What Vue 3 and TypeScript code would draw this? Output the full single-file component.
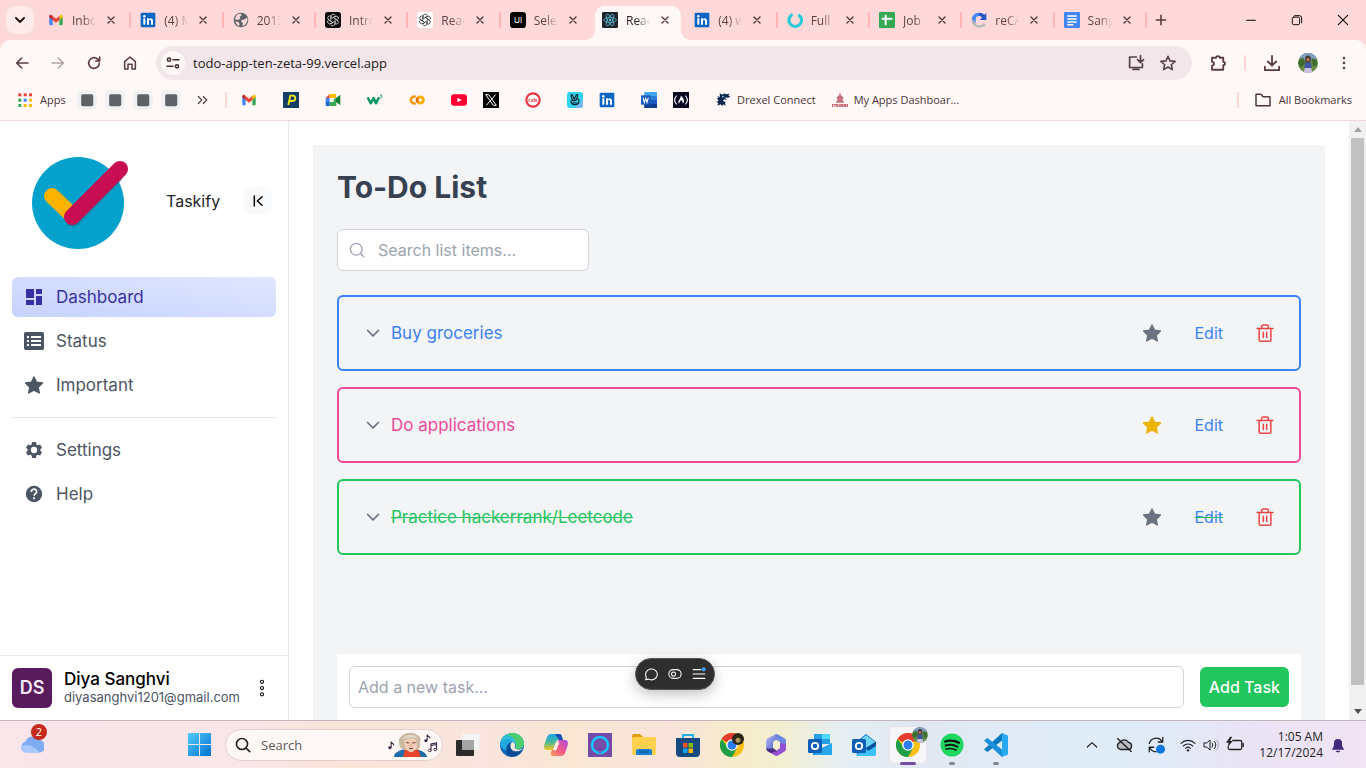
<script setup lang="ts">
import { ref } from 'vue'

interface Tab { icon: string; title: string; active?: boolean }
interface Bookmark { icon: string; name: string; label?: string; wide?: boolean }
interface Task { id: number; title: string; tone: string; starred: boolean; done: boolean }

const line = (body: string, width = 2) =>
  `<g fill="none" stroke="currentColor" stroke-width="${width}" stroke-linecap="round" stroke-linejoin="round">${body}</g>`

const gmail = '<path d="M2 7v11.500a1.500 1.500 0 0 0 1.500 1.500H7V9.500z" fill="#4285f4"/><path d="M17 9.500V20h3.500a1.500 1.500 0 0 0 1.500-1.500V7z" fill="#34a853"/><path d="M2 6.500V8l5 4V6L5 4.500C3.700 3.600 2 4.800 2 6.500z" fill="#c5221f"/><path d="M22 6.500V8l-5 4V6l2-1.500c1.300-.9 3 .3 3 2z" fill="#fbbc04"/><path d="M7 6l5 4 5-4v6l-5 4-5-4z" fill="#ea4335"/>'
const linkedin = '<rect x="1" y="1" width="22" height="22" rx="1.500" fill="#0a66c2"/><rect x="5" y="9.500" width="3" height="9.500" fill="#fff"/><circle cx="6.500" cy="6.300" r="1.900" fill="#fff"/><path d="M10.500 9.500h3V11c1.500-2.800 6-2.200 6 2.500V19h-3v-5c0-3-3-3-3 0v5h-3z" fill="#fff"/>'
const knot = (bg: string, fg: string) =>
  `<rect width="24" height="24" rx="4" fill="${bg}"/><g fill="none" stroke="${fg}" stroke-width="1.300">` +
  [0, 60, 120, 180, 240, 300].map(a => `<path transform="rotate(${a} 12 12)" d="M9 12V6.500a3.300 3.300 0 0 1 6-1.800M12 8.400l4.500-2.500"/>`).join('') + '</g>'
const outlookFront = '<rect x="0" y="6" width="14" height="14" rx="1.500" fill="#0f5fb8"/><circle cx="7" cy="13" r="3.200" fill="none" stroke="#fff" stroke-width="1.800"/>'
const chrome = '<circle cx="12" cy="12" r="12" fill="#fbc116"/><path d="M12 12L1.600 6A12 12 0 0 1 22.400 6z" fill="#e33b2e"/><path d="M1.600 6A12 12 0 0 0 12 24l5-9-8 1z" fill="#1e9e49"/><circle cx="12" cy="12" r="5.800" fill="#fff"/><circle cx="12" cy="12" r="4.500" fill="#2a7cf0"/>'

const icons: Record<string, string> = {
  gmail,
  linkedin,
  globe: '<circle cx="12" cy="12" r="11" fill="#5f6368"/><path d="M4 7c2-4 6-5 8-4l1 2-3 2 1 3-4 2-2-1-2 1zM13 12l5-1 3-3 1 4-2 5-4 4-2-1 1-4-3-1zM4 14l4 1 2 3-1 3c-3-1-5-4-5-7z" fill="#ffd9d9"/>',
  gptDark: knot('#0b0b0b', '#d5d5d5'),
  gptLight: knot('#ffffff', '#333333'),
  ui: '<rect width="24" height="24" rx="5" fill="#050505"/><text x="12" y="16.500" font-family="Inter, sans-serif" font-size="12" text-anchor="middle" fill="#fff">UI</text>',
  react: '<rect width="24" height="24" rx="2" fill="#20232a"/><g fill="none" stroke="#5fc6df" stroke-width="1.100"><ellipse cx="12" cy="12" rx="9.500" ry="3.700"/><ellipse cx="12" cy="12" rx="9.500" ry="3.700" transform="rotate(60 12 12)"/><ellipse cx="12" cy="12" rx="9.500" ry="3.700" transform="rotate(120 12 12)"/></g><circle cx="12" cy="12" r="1.900" fill="#5fc6df"/>',
  ring: '<path d="M8.500 3.700A9.400 9.400 0 1 0 17 4.100" fill="none" stroke="#22cbd8" stroke-width="4.500"/>',
  sheets: '<rect width="24" height="24" rx="2" fill="#34a853"/><path d="M8.500 4h3v4.500H20v3h-8.500V20h-3v-8.500H4v-3h4.500z" fill="#fff"/>',
  recaptcha: '<path d="M4.500 15.500c3 5 10 6 15 1l3 3c-7 6-16 5-20-2z" fill="#b9bcc0"/><path d="M1 10.500C2 5 6 1 12 1v5c-3 0-5 2-5 5v5.500z" fill="#4285f4"/><path d="M12 1c4 0 6 1 8 3l3-2.500V12H13l3.500-3.500C15 6.500 13.500 6 12 6z" fill="#2458c8"/><path d="M1 10.500L7 17l-2.500 2.500C2 17 .7 14 1 10.500z" fill="#a9adb2"/>',
  docs: '<rect width="24" height="24" rx="2" fill="#4285f4"/><path d="M5 6h14M5 10.500h14M5 15h14M5 19h9" stroke="#fff" stroke-width="2.200"/>',
  close: line('<path d="M6 6l12 12M18 6L6 18"/>', 2.8),
  chev: line('<path d="M5.500 9l6.500 6.500L18.500 9"/>', 2),
  chevBold: line('<path d="M6 9l6 6 6-6"/>', 3),
  chevUp: line('<path d="M4 15.500l8-7.500 8 7.500"/>', 2),
  plus: line('<path d="M12 4v16M4 12h16"/>', 2.6),
  min: '<path d="M4 12.500h16" stroke="currentColor" stroke-width="1.700"/>',
  restore: line('<rect x="4" y="7" width="12.500" height="13" rx="2.500"/><path d="M8 4.500h8a4 4 0 0 1 4 4V17"/>', 1.6),
  winClose: line('<path d="M4 4l16 16M20 4L4 20"/>', 1.8),
  back: line('<path d="M21 12H4M11.500 4.500L4 12l7.500 7.500"/>', 2.4),
  forward: line('<path d="M3 12h17M12.500 4.500L20 12l-7.500 7.500"/>', 2.4),
  reload: line('<path d="M20 12a8 8 0 1 1-2.500-5.800L20 8.500M20.500 3v6h-6"/>', 2.4),
  home: line('<path d="M4 10l8-7 8 7v11h-5v-7H9v7H4z"/>', 2.3),
  tune: line('<circle cx="6" cy="7" r="2.400"/><path d="M12 7h9M3 17h9"/><circle cx="18" cy="17" r="2.400"/>', 2.3),
  install: line('<path d="M12.500 4H3.500v14h17v-5M8 20.500h8"/><path d="M18 2v9M14 7.500l4 4 4-4"/>', 2.3),
  starLine: line('<path d="M12 3l2.700 6.200 6.800.6-5.100 4.500 1.500 6.600-5.900-3.500-5.900 3.500 1.500-6.600-5.100-4.500 6.800-.6z"/>', 2.1),
  puzzle: line('<path d="M4 5h5.500c0-3 5-3 5 0H19v5.500c3 0 3 4.500 0 4.500v6H4v-5.500c3.500 0 3.500-5 0-5z"/>', 2.4),
  download: line('<path d="M12 2.500v13M6.500 10l5.500 5.500L17.500 10M2.500 17v4.500h19V17"/>', 2.4),
  dots: '<g fill="currentColor"><circle cx="12" cy="4.500" r="2"/><circle cx="12" cy="12" r="2"/><circle cx="12" cy="19.500" r="2"/></g>',
  face: '<circle cx="12" cy="12" r="12" fill="#668b4b"/><path d="M2 5a12 12 0 0 1 20 0l-1 4H3z" fill="#7fa0c2"/><path d="M1 9l5-4 3 7-5 5-4-4zM16 6l6 2 1 7-5 1z" fill="#3f6c2e"/><ellipse cx="12" cy="7.500" rx="3.500" ry="4.500" fill="#4b342c"/><ellipse cx="12" cy="8" rx="1.800" ry="2.300" fill="#a97c65"/><path d="M8.500 11.500h7l1 7h-9z" fill="#3f57a0"/><path d="M8 18h8l1 5c-3 1.300-7 1.300-10 0z" fill="#c9bfe0"/>',
  apps: [['#ea4335', '#ea4335', '#ea4335'], ['#34a853', '#4285f4', '#fbbc04'], ['#34a853', '#fbbc04', '#fbbc04']]
    .map((row, y) => row.map((c, x) => `<rect x="${2 + x * 8}" y="${2 + y * 8}" width="4.500" height="4.500" fill="${c}"/>`).join('')).join(''),
  block: '<rect width="24" height="24" rx="6" fill="#eff1f3"/><rect x="5" y="5" width="14.500" height="14.500" rx="2" fill="#5f6368"/>',
  more: line('<path d="M4 6l6 6-6 6M12.500 6l6 6-6 6"/>', 2.2),
  paint: '<rect width="24" height="24" fill="#143d68"/><path d="M8 19.500l3-14h3.500a3.600 3.600 0 0 1 0 8H10" fill="none" stroke="#f2e614" stroke-width="2.800"/>',
  meet: '<path d="M1 9l6-6v6z" fill="#ea4335"/><path d="M7 3h9.500v6H7z" fill="#fbbc04"/><path d="M1 9h6v6H1z" fill="#4285f4"/><path d="M1 15h6v6H2.500A1.500 1.500 0 0 1 1 19.500z" fill="#1967d2"/><path d="M7 15h5l5-3v9H7z" fill="#34a853"/><path d="M12.500 12L23 4v16z" fill="#188038"/><path d="M16.500 3v6l-4 3 4 4z" fill="#34a853"/>',
  w3: '<path d="M1 8l4.500 9L10 9l3.500 8L18 8" fill="none" stroke="#059862" stroke-width="3.600" stroke-linejoin="round"/><path d="M19.500 4.500h3l-1.500 2c2 0 2 3-1.500 2.600" fill="none" stroke="#059862" stroke-width="1.200"/>',
  colab: '<g fill="none" stroke-width="4"><path d="M10 7.500a5 5 0 1 0 0 9" stroke="#f09a17"/><circle cx="17" cy="12" r="4.700" stroke="#f9ab00"/><path d="M13.500 15.500a4.700 4.700 0 0 1 0-7" stroke="#e8710a"/></g>',
  youtube: '<rect y="3.500" width="24" height="17" rx="4.500" fill="#ff0033"/><path d="M9.500 8.500v7l6.500-3.500z" fill="#fff"/>',
  x: '<rect width="24" height="24" fill="#000"/><path d="M4 4h4.500L20 20h-4.500zM19 4L5 20" fill="none" stroke="#fff" stroke-width="1.500"/>',
  cafe: '<circle cx="12" cy="12" r="10" fill="#fff" stroke="#e3343f" stroke-width="3.200"/><text x="12" y="14.500" font-family="Inter, sans-serif" font-size="6.500" font-weight="700" text-anchor="middle" fill="#e3343f">cafe</text>',
  hand: '<rect width="24" height="24" rx="4" fill="#31d5ef"/><path d="M24 12v8a4 4 0 0 1-4 4h-8z" fill="#7db7ff"/><g fill="none" stroke="#10242e" stroke-width="1.800" stroke-linecap="round"><path d="M8 12L6 5.500c0-2 2-2 2.500 0L11 11l2.500-6c1-2 3-1 2.500.5L14.500 11M6 13c0 8 12 8 12 0 0-3-5-3-5 0H8.500M9 16.500h6"/></g>',
  word: '<rect x="5" width="19" height="24" fill="#41a5ee"/><path d="M5 6h19v6H5z" fill="#2b7cd3"/><path d="M5 12h19v6H5z" fill="#185abd"/><path d="M5 18h19v6H5z" fill="#103f91"/><rect y="5" width="14" height="14" fill="#185abd"/><path d="M3 8.500l2 7 2-6 2 6 2-7" fill="none" stroke="#fff" stroke-width="1.600"/>',
  fcc: '<rect width="24" height="24" fill="#0a0a23"/><path d="M5 6c-3 3.500-3 8.500 0 12M19 6c3 3.500 3 8.500 0 12" fill="none" stroke="#fff" stroke-width="1.700" stroke-linecap="round"/><path d="M9 17.500l-1-2c0-4 4-5 3.500-10 4 2 5 6 5 9l-1.500 3-1-4-2-1.500-1.500 2z" fill="#fff"/>',
  dragon: '<path d="M7 2l4 2 4-2 1 1.500 6-1-2 3 3.500 1.500-4 1.500-3.500.5 2 3-4.500-1-1.500 2.500 4 1.500-1 1.500 1 4-4-2-1 3-2.500-3-5 2 1.500-4-3-1.500 3.500-2-3-4 3.500.5L3 6l4.500 1.500z" fill="#07294d"/><path d="M11 6l3 .5-3 2zM15 8.500l3.500-1-3 2.500z" fill="#dceaf5"/>',
  stevens: '<path d="M12 1l2 5 3 2-1 4 2 4H6l2-4-1-4 3-2z" fill="#b65260"/><path d="M12 4v12M9 9v7M15 9v7" stroke="#f6dcdc" stroke-width=".8"/><text x="12" y="23" font-family="Inter, sans-serif" font-size="5.600" font-weight="800" text-anchor="middle" fill="#b4263c">STEVENS</text>',
  folder: line('<path d="M1.500 20.500v-17h7.500l3 3.500h10.500v13.500z"/>', 2.2),
  collapse: line('<path d="M6.500 4.500v15M18 5.500L11 12l7 6.500"/>', 2.2),
  dashboard: '<path d="M2.400 13.200H12V2.400H2.400zm0 8.400H12v-6H2.400zm12 0h7.200V10.800h-7.200zm0-19.200v6h7.200v-6z" fill="currentColor"/>',
  status: '<path fill-rule="evenodd" d="M2 1.200h20a2 2 0 0 1 2 2v17.600a2 2 0 0 1-2 2H2a2 2 0 0 1-2-2V3.200a2 2 0 0 1 2-2zM3.600 6v2.400H6V6zM3.600 10.800v2.400H6v-2.400zM3.600 15.600V18H6v-2.400zM8.400 6v2.400h12V6zM8.400 10.800v2.400h12v-2.400zM8.400 15.600V18h12v-2.400z" fill="currentColor"/>',
  star: '<path d="M12 2.300l3.100 6.400 7.100.9-5.200 5 1.400 7-6.400-3.500-6.400 3.500 1.400-7-5.200-5 7.100-.9z" fill="currentColor" stroke="currentColor" stroke-width="1.600" stroke-linejoin="round"/>',
  gear: '<path fill-rule="evenodd" d="M9.700 2.500h4.600l.6 2.800 1.700 1 2.700-.9 2.300 3.900-2 1.900v1.600l2 1.900-2.300 3.900-2.700-.9-1.700 1-.6 2.800H9.700l-.6-2.800-1.700-1-2.700.9-2.300-3.900 2-1.900v-1.600l-2-1.900 2.300-3.900 2.700.9 1.700-1zM12 8.200a3.800 3.800 0 1 0 0 7.600 3.800 3.800 0 0 0 0-7.600z" fill="currentColor"/>',
  help: '<circle cx="12" cy="12" r="9.800" fill="currentColor"/><path d="M8.800 9.500c.2-4.600 6.700-4.200 6.400-.3-.2 2.300-3 2.500-3 5" fill="none" stroke="#fff" stroke-width="2"/><rect x="11" y="16" width="2.200" height="2.200" fill="#fff"/>',
  rings: line('<circle cx="12" cy="4.500" r="1.900"/><circle cx="12" cy="12" r="1.900"/><circle cx="12" cy="19.500" r="1.900"/>', 1.3),
  search: line('<circle cx="11" cy="11" r="7.800"/><path d="M17 17l4 4"/>', 1.8),
  searchBold: line('<circle cx="10.500" cy="10.500" r="8.300"/><path d="M16.500 16.500L22 22"/>', 2.4),
  trash: line('<path d="M2.500 6.500h19M5 6.500v14a1.500 1.500 0 0 0 1.500 1.500h11a1.500 1.500 0 0 0 1.500-1.500v-14M8 6.500V4a1.500 1.500 0 0 1 1.500-1.500h5A1.500 1.500 0 0 1 16 4v2.500M10 11v6.500M14 11v6.500"/>', 1.8),
  comment: line('<path d="M3 22l1-5A10 9.300 0 1 1 8 20.800z"/>', 1.8),
  eye: line('<rect x="1.500" y="4.500" width="21" height="15" rx="7.500"/><circle cx="9.500" cy="12" r="3.500"/>', 1.8),
  menu: '<path d="M2 4.500h13M2 12h20M2 19.500h20" stroke="#fff" stroke-width="1.900" stroke-linecap="round"/><circle cx="20" cy="4" r="3.600" fill="#3b9cff"/>',
  weather: '<path d="M6 19.500a5.700 5.700 0 0 1-.5-11A8 8 0 0 1 19.500 7 6.300 6.300 0 0 1 20 19.500z" fill="#7fabf2"/><path d="M5 19.500a5 5 0 0 1-4-6c7-4 13 0 19 6z" fill="#a9c8fb"/>',
  windows: '<defs><linearGradient id="win" x1="0" y1="0" x2="1" y2="1"><stop offset="0" stop-color="#52cdfb"/><stop offset="1" stop-color="#0070d0"/></linearGradient></defs><path d="M0 0h11.500v11.500H0zM12.500 0H24v11.500H12.500zM0 12.500h11.500V24H0zM12.500 12.500H24V24H12.500z" fill="url(#win)"/>',
  composer: '<path d="M1 24c0-4 4-6 9-7.500h14c5 1 9 3 10 7.500z" fill="#1c6da8"/><path d="M12 16l6 3 7-3 3 8H10z" fill="#e6452c"/><path d="M6 9c-1-4 3-6 4-7 3-3 12-3 14 0 4 1 4 6 3 8 1 4-1 6-4 7H12c-3 0-6-3-6-8z" fill="#cbb9a4"/><path d="M11 8c2-3 10-3 12-1l1 6c-1 4-4 6-6 6s-5-2-6-5z" fill="#f3cdb5"/><path d="M9 7c2-6 13-7 16-1-5-2-11-2-16 1z" fill="#e2d7c8"/><path d="M13 9.500l3 .5M19.500 10l3-.5M16 15.500h4" stroke="#70453d" stroke-width="1.100"/><path d="M18 10v3.500h1" fill="none" stroke="#d99e87" stroke-width=".9"/>',
  note: '<path d="M10 4v14M10 4c1 5 8 4 6 9" fill="none" stroke="#3c2444" stroke-width="2.500"/><ellipse cx="7" cy="18.500" rx="4" ry="3.400" fill="#3c2444"/>',
  notes: '<path d="M8 19V6l11-2v13M8 9l11-2" fill="none" stroke="#3c2444" stroke-width="2.200"/><ellipse cx="5.500" cy="19" rx="3" ry="2.300" fill="none" stroke="#3c2444" stroke-width="1.800"/><ellipse cx="16.500" cy="17" rx="3" ry="2.300" fill="none" stroke="#3c2444" stroke-width="1.800"/>',
  taskview: '<rect x="6" y="1" width="17.500" height="16" rx="1" fill="#f4f4f4"/><rect x="0" y="7" width="18" height="16" rx="1" fill="#2b2b2b"/><path d="M6 7h12v10H6z" fill="#a5a5a5"/>',
  edge: '<circle cx="12" cy="12" r="12" fill="#0c68b8"/><path d="M.2 10C2-2 21-4 23.800 10c.6 5-4 7-9 5.500 2-2.500 1-6.500-3-7C6 8 1.500 10 .2 13z" fill="#2fc0d8"/><path d="M12 0c7 0 12 5 12 10.500 0 5-5 6.500-9 5 3-5 0-12-9-14z" fill="#4bcf6e"/><path d="M.2 10C4 5 10 5 13 8.500 8 9 7 14 9.500 18c-5 0-9-3-9.300-8z" fill="#1fa9dd"/><path d="M10 9.500c-2 6 4 11 12 7.500-3 6-9 7-12 6.500-5-3-5-11 0-14z" fill="#0a4b96"/><path d="M12 9c3 0 4 3 2.500 6 2.500 2 6 2 8.500.5-3 3.500-10 4-12 0-1-2-.5-5 1-6.500z" fill="#fbe9dc"/>',
  copilot: '<defs><linearGradient id="cpa" x1="0" y1="0" x2="0" y2="1"><stop offset="0" stop-color="#1aa6e8"/><stop offset=".5" stop-color="#48b89a"/><stop offset="1" stop-color="#f4c61c"/></linearGradient><linearGradient id="cpb" x1="1" y1="0" x2="0" y2="1"><stop offset="0" stop-color="#a64be8"/><stop offset=".5" stop-color="#f0588a"/><stop offset="1" stop-color="#fb9d57"/></linearGradient></defs><path d="M7 1h8c2 0 2.500 1 3 3l1 3h-4c-2 0-3 1-3.500 3L9 17H3c-3 0-3.500-3-2.500-6L3 4c1-2 2-3 4-3z" fill="url(#cpa)"/><path d="M17 23H9c-2 0-3-2-2-4l1-2c2 0 3-1 3.500-3L15 7h6c3 0 3.500 3 2.500 6L21 20c-1 2-2 3-4 3z" fill="url(#cpb)"/><path d="M11 1h4c2 0 2.500 1 3 3l1 3h-4z" fill="#1b50b8"/><path d="M12.500 9l3 .5-3.500 8-3-.5z" fill="#fdeee6"/>',
  alexa: '<rect width="24" height="24" fill="#744ca8"/><circle cx="12" cy="12" r="8" fill="none" stroke="#14c8ff" stroke-width="2.500"/><path d="M10.500 18.500l1.500 2.500 1.500-2.500z" fill="#744ca8"/>',
  explorer: '<path d="M0 3a2 2 0 0 1 2-2h6l3 3v4H0z" fill="#dfa014"/><rect y="4" width="24" height="18" rx="1.500" fill="#ffd04e"/><path d="M4 18a2 2 0 0 1 2-2h12a2 2 0 0 1 2 2v4H4z" fill="#1780d3"/><path d="M7 19h10" stroke="#105a9c" stroke-width="1.500"/>',
  store: '<path d="M7 7V2h10v5" fill="none" stroke="#27b1ea" stroke-width="2"/><path d="M0 5h24v15a4 4 0 0 1-4 4H4a4 4 0 0 1-4-4z" fill="#184a82"/><path d="M7 10h4.500v4.500H7z" fill="#f35325"/><path d="M12.500 10H17v4.500h-4.500z" fill="#81bc06"/><path d="M7 15.500h4.500V20H7z" fill="#05a6f0"/><path d="M12.500 15.500H17V20h-4.500z" fill="#ffba08"/>',
  chrome,
  m365: '<defs><linearGradient id="m3" x1="0" y1="0" x2="1" y2="1"><stop offset="0" stop-color="#c3bcf4"/><stop offset="1" stop-color="#3b58c8"/></linearGradient></defs><path d="M11 1.500a3 3 0 0 1 3 0l6 3.500a3 3 0 0 1 2 2.500V14l-6-2V9l-5-3z" fill="#6f86de"/><path d="M12 1l1 5-4 3v7l-5 3-2-3V8a3 3 0 0 1 1.500-2.500z" fill="url(#m3)"/><path d="M22 11v5a3 3 0 0 1-1.500 2.500L14 22.500a3 3 0 0 1-3 0L4 18.500l8-.5 4-3v-5z" fill="#9350d0"/><path d="M2 15c2 1 5 1 7 0l4 3-6 2-3.500-2z" fill="#4a2d87"/>',
  outlook: '<path d="M6 1h16v10H6z" fill="#27a0e5"/><path d="M14 1h8v5h-8z" fill="#50d9ff"/><path d="M5 10l9 5 10-5v12H5z" fill="#1490df"/><path d="M5 22l19-12v12z" fill="#28a8ea"/>' + outlookFront,
  outlookNew: '<path d="M4 9l10-8 10 8v11a3 3 0 0 1-3 3H5z" fill="#1370c8"/><path d="M8 7l6-5 9 7-9 6z" fill="#6cd6fb"/><path d="M4 22l20-12v10a3 3 0 0 1-3 3H5z" fill="#3cc4f8"/><path d="M14 15l10-6v4l-8 5z" fill="#0b4fa0"/>' + outlookFront,
  spotify: '<circle cx="12" cy="12" r="11.500" fill="#1ed760"/><g fill="none" stroke="#111" stroke-linecap="round"><path d="M5 8.500c5-1.500 10-1 14 1.200" stroke-width="2.200"/><path d="M5.500 12.500c4-1.200 8.500-.8 12 1.200" stroke-width="1.900"/><path d="M6 16c3.500-.9 7-.6 10 1" stroke-width="1.600"/></g>',
  vscode: '<path d="M18 0v7.500L3.500 19 0 16.500z" fill="#0a78c2"/><path d="M18 24v-7.500L3.500 5 0 7.500z" fill="#1b8fda"/><path d="M18 0l6 2.500v19L18 24z" fill="#29a9f2"/>',
  cloudOff: '<path d="M7 18a5 5 0 0 1-.5-9.500A6.500 6.500 0 0 1 18 8.500 4.800 4.800 0 0 1 18 18z" fill="#b9bcc2" stroke="#222" stroke-width="1.700"/><path d="M3 3l19 18" stroke="#222" stroke-width="2"/>',
  sync: line('<path d="M3 10a9.500 9.500 0 0 1 17-3M21 2v6h-6M12 21a9 9 0 0 1-8-5M3 21v-6h6"/>', 1.7) + '<circle cx="18" cy="17.500" r="6" fill="#0b78dc"/>',
  wifi: line('<path d="M1.500 9.500c6-6 15-6 21 0M5 13.500c4-4 10-4 14 0M8.500 17c2-2 5-2 7 0"/>', 1.7) + '<circle cx="12" cy="20" r="1.800" fill="currentColor"/>',
  volume: line('<path d="M1.500 9v6h4l5 4.500v-15L5.500 9zM13.500 9c1.500 2 1.500 4 0 6M17 6.500c3 3 3 8 0 11"/>', 1.5) + '<path d="M20 4c4 4.500 4 11.500 0 16" fill="none" stroke="#aaa" stroke-width="1.500"/>',
  battery: line('<path d="M9 6h10a2 2 0 0 1 2 2v8a2 2 0 0 1-2 2H5a2 2 0 0 1-2-2v-1.500M23 10v4"/>', 1.7) + '<path d="M5.500 1L0 9h3.500L2 15l7-8.500H5.500L8 1z" fill="currentColor"/>',
  bell: '<path d="M4 17c2-3 2-5 2-8a6 6 0 0 1 12 0c0 3 0 5 2 8l1.500 2h-19z" fill="#43297d"/><path d="M8.500 20.500h7c-1 3-6 3-7 0z" fill="#43297d"/>'
}

const tabs: Tab[] = [
  { icon: 'gmail', title: 'Inbo' },
  { icon: 'linkedin', title: '(4) M' },
  { icon: 'globe', title: '2015' },
  { icon: 'gptDark', title: 'Intro' },
  { icon: 'gptLight', title: 'Reac' },
  { icon: 'ui', title: 'Sele' },
  { icon: 'react', title: 'Reac', active: true },
  { icon: 'linkedin', title: '(4) w' },
  { icon: 'ring', title: 'Full' },
  { icon: 'sheets', title: 'Job' },
  { icon: 'recaptcha', title: 'reCA' },
  { icon: 'docs', title: 'Sang' }
]

const bookmarks: Bookmark[] = [
  { icon: 'gmail', name: 'Gmail' },
  { icon: 'paint', name: 'Plum', wide: true },
  { icon: 'meet', name: 'Meet', wide: true },
  { icon: 'w3', name: 'W3Schools', wide: true },
  { icon: 'colab', name: 'Colab', wide: true },
  { icon: 'youtube', name: 'YouTube', wide: true },
  { icon: 'x', name: 'X' },
  { icon: 'cafe', name: 'Cafe', wide: true },
  { icon: 'hand', name: 'Hand', wide: true },
  { icon: 'linkedin', name: 'LinkedIn' },
  { icon: 'word', name: 'Word', wide: true },
  { icon: 'fcc', name: 'freeCodeCamp' },
  { icon: 'dragon', name: 'Drexel Connect', label: 'Drexel Connect', wide: true },
  { icon: 'stevens', name: 'My Apps', label: 'My Apps Dashboar...' }
]

const nav = [
  { icon: 'dashboard', label: 'Dashboard' },
  { icon: 'status', label: 'Status' },
  { icon: 'star', label: 'Important' }
]
const navMore = [
  { icon: 'gear', label: 'Settings' },
  { icon: 'help', label: 'Help' }
]

const tasks = ref<Task[]>([
  { id: 1, title: 'Buy groceries', tone: 'blue', starred: false, done: false },
  { id: 2, title: 'Do applications', tone: 'pink', starred: true, done: false },
  { id: 3, title: 'Practice hackerrank/Leetcode', tone: 'green', starred: false, done: true }
])
const query = ref('')
const draft = ref('')
const url = ref('todo-app-ten-zeta-99.vercel.app')

function addTask() {
  const title = draft.value.trim()
  if (!title) return
  tasks.value.push({ id: Date.now(), title, tone: 'blue', starred: false, done: false })
  draft.value = ''
}
function removeTask(id: number) {
  tasks.value = tasks.value.filter(t => t.id !== id)
}

const dock = [
  { icon: 'taskview', name: 'Task view' },
  { icon: 'edge', name: 'Edge' },
  { icon: 'copilot', name: 'Copilot' },
  { icon: 'alexa', name: 'Alexa' },
  { icon: 'explorer', name: 'File Explorer' },
  { icon: 'store', name: 'Store' },
  { icon: 'chrome', name: 'Chrome', badge: 'dark' },
  { icon: 'm365', name: 'Microsoft 365' },
  { icon: 'outlook', name: 'Outlook' },
  { icon: 'outlookNew', name: 'Outlook new' },
  { icon: 'chrome', name: 'Chrome', badge: 'photo', state: 'current' },
  { icon: 'spotify', name: 'Spotify', state: 'open' },
  { icon: 'vscode', name: 'VS Code', state: 'open' }
]
</script>

<template>
  <div class="screen">
    <header class="strip">
      <button class="tab-search" aria-label="Search tabs"><svg class="i16" viewBox="0 0 24 24" v-html="icons.chevBold" /></button>
      <div class="tabs" role="tablist">
        <div v-for="(tab, i) in tabs" :key="i" class="tab" :class="{ active: tab.active, plain: tabs[i + 1]?.active }" role="tab" :aria-selected="!!tab.active">
          <svg class="i16 fav" viewBox="0 0 24 24" v-html="icons[tab.icon]" />
          <span class="tab-title">{{ tab.title }}</span>
          <button class="tab-close" aria-label="Close tab"><svg class="i12" viewBox="0 0 24 24" v-html="icons.close" /></button>
        </div>
      </div>
      <button class="new-tab" aria-label="New tab"><svg class="i14" viewBox="0 0 24 24" v-html="icons.plus" /></button>
      <div class="win-controls">
        <button aria-label="Minimize"><svg class="i14" viewBox="0 0 24 24" v-html="icons.min" /></button>
        <button aria-label="Restore"><svg class="i14" viewBox="0 0 24 24" v-html="icons.restore" /></button>
        <button aria-label="Close"><svg class="i14" viewBox="0 0 24 24" v-html="icons.winClose" /></button>
      </div>
    </header>

    <div class="chrome-bars">
      <div class="toolbar">
        <button class="tool" aria-label="Back"><svg class="i16" viewBox="0 0 24 24" v-html="icons.back" /></button>
        <button class="tool off" aria-label="Forward"><svg class="i16" viewBox="0 0 24 24" v-html="icons.forward" /></button>
        <button class="tool" aria-label="Reload"><svg class="i16" viewBox="0 0 24 24" v-html="icons.reload" /></button>
        <button class="tool" aria-label="Home"><svg class="i16" viewBox="0 0 24 24" v-html="icons.home" /></button>
        <div class="omnibox">
          <button class="tune" aria-label="Site information"><svg class="i16" viewBox="0 0 24 24" v-html="icons.tune" /></button>
          <input v-model="url" class="url" aria-label="Address" spellcheck="false" />
          <button class="omni-btn" aria-label="Install"><svg class="i18" viewBox="0 0 24 24" v-html="icons.install" /></button>
          <button class="omni-btn" aria-label="Bookmark"><svg class="i18" viewBox="0 0 24 24" v-html="icons.starLine" /></button>
        </div>
        <div class="tool-end">
          <button class="tool" aria-label="Extensions"><svg class="i18" viewBox="0 0 24 24" v-html="icons.puzzle" /></button>
          <i class="rule" />
          <button class="tool" aria-label="Downloads"><svg class="i18" viewBox="0 0 24 24" v-html="icons.download" /></button>
          <button class="tool" aria-label="Profile"><svg class="i20" viewBox="0 0 24 24" v-html="icons.face" /></button>
          <button class="tool" aria-label="Menu"><svg class="i16" viewBox="0 0 24 24" v-html="icons.dots" /></button>
        </div>
      </div>
      <nav class="bookmarks" aria-label="Bookmarks">
        <a href="#" class="bm apps"><svg class="i16" viewBox="0 0 24 24" v-html="icons.apps" />Apps</a>
        <div class="blocks"><svg v-for="n in 4" :key="n" class="i20" viewBox="0 0 24 24" v-html="icons.block" /></div>
        <button class="more" aria-label="More"><svg class="i14" viewBox="0 0 24 24" v-html="icons.more" /></button>
        <i class="rule" />
        <a v-for="b in bookmarks" :key="b.name" href="#" class="bm site" :class="{ wide: b.wide }" :aria-label="b.name">
          <svg class="i16" viewBox="0 0 24 24" v-html="icons[b.icon]" /><span v-if="b.label">{{ b.label }}</span>
        </a>
        <i class="rule last" />
        <a href="#" class="bm all"><svg class="i16" viewBox="0 0 24 24" v-html="icons.folder" />All Bookmarks</a>
      </nav>
    </div>

    <div class="page">
      <aside class="sidebar">
        <div class="brand">
          <svg class="logo" viewBox="0 0 100 96" aria-hidden="true">
            <circle cx="48" cy="48" r="46" fill="#03a1cb" />
            <path d="M22 41l21 20" stroke="#fbb200" stroke-width="16" stroke-linecap="round" />
            <path d="M43 64L84 22" stroke="#0b6c91" stroke-width="16" stroke-linecap="round" opacity=".5" />
            <path d="M42 62L90 14" stroke="#c80d53" stroke-width="16" stroke-linecap="round" />
          </svg>
          <span class="brand-name">Taskify</span>
          <button class="collapse" aria-label="Collapse sidebar"><svg class="i16" viewBox="0 0 24 24" v-html="icons.collapse" /></button>
        </div>
        <nav class="menu" aria-label="Main">
          <a v-for="(n, i) in nav" :key="n.label" href="#" class="menu-item" :class="{ on: i === 0 }">
            <svg class="i20" viewBox="0 0 24 24" v-html="icons[n.icon]" />{{ n.label }}
          </a>
          <hr />
          <a v-for="n in navMore" :key="n.label" href="#" class="menu-item">
            <svg class="i20" viewBox="0 0 24 24" v-html="icons[n.icon]" />{{ n.label }}
          </a>
        </nav>
        <div class="user">
          <span class="avatar">DS</span>
          <div class="who">
            <h4>Diya Sanghvi</h4>
            <span>diyasanghvi1201@gmail.com</span>
          </div>
          <button class="user-menu" aria-label="Account menu"><svg class="i20" viewBox="0 0 24 24" v-html="icons.rings" /></button>
        </div>
      </aside>

      <main class="main">
        <section class="card">
          <h1>To-Do List</h1>
          <label class="search">
            <svg class="i18" viewBox="0 0 24 24" v-html="icons.search" />
            <input v-model="query" type="text" placeholder="Search list items..." aria-label="Search list items" />
          </label>
          <ul class="list">
            <li v-for="t in tasks" :key="t.id" class="task" :class="[t.tone, { done: t.done }]">
              <button class="expand" aria-label="Expand"><svg class="i20" viewBox="0 0 24 24" v-html="icons.chev" /></button>
              <span class="task-title">{{ t.title }}</span>
              <button class="star" :class="{ lit: t.starred }" aria-label="Star" @click="t.starred = !t.starred"><svg class="i20" viewBox="0 0 24 24" v-html="icons.star" /></button>
              <button class="edit">Edit</button>
              <button class="trash" aria-label="Delete" @click="removeTask(t.id)"><svg class="i20" viewBox="0 0 24 24" v-html="icons.trash" /></button>
            </li>
          </ul>
          <form class="composer" @submit.prevent="addTask">
            <input v-model="draft" type="text" placeholder="Add a new task..." aria-label="Add a new task" />
            <button type="submit">Add Task</button>
          </form>
        </section>
      </main>

      <div class="scrollbar" aria-hidden="true"><i class="arrow up" /><i class="thumb" /><i class="arrow down" /></div>

      <div class="float-bar">
        <button aria-label="Comment"><svg class="i14" viewBox="0 0 24 24" v-html="icons.comment" /></button>
        <button aria-label="Preview"><svg class="i14" viewBox="0 0 24 24" v-html="icons.eye" /></button>
        <button aria-label="Menu"><svg class="i14" viewBox="0 0 24 24" v-html="icons.menu" /></button>
      </div>
    </div>

    <footer class="taskbar">
      <button class="weather" aria-label="Widgets"><svg class="i24" viewBox="0 0 24 24" v-html="icons.weather" /><span>2</span></button>
      <div class="dock">
        <button class="dock-btn" aria-label="Start"><svg class="i23" viewBox="0 0 24 24" v-html="icons.windows" /></button>
        <label class="win-search">
          <svg class="i16" viewBox="0 0 24 24" v-html="icons.searchBold" />
          <input type="text" placeholder="Search" aria-label="Search" />
          <svg class="i10 lead" viewBox="0 0 24 24" v-html="icons.note" />
          <svg class="bust" viewBox="0 0 36 24" v-html="icons.composer" />
          <svg class="i10 raised" viewBox="0 0 24 24" v-html="icons.note" />
          <svg class="i12" viewBox="0 0 24 24" v-html="icons.notes" />
        </label>
        <button v-for="(d, i) in dock" :key="i" class="dock-btn" :class="d.state" :aria-label="d.name">
          <svg class="i24" viewBox="0 0 24 24" v-html="icons[d.icon]" />
          <i v-if="d.badge === 'dark'" class="badge dark" />
          <svg v-if="d.badge === 'photo'" class="badge" viewBox="0 0 24 24" v-html="icons.face" />
        </button>
      </div>
      <div class="tray">
        <button aria-label="Hidden icons"><svg class="i14" viewBox="0 0 24 24" v-html="icons.chevUp" /></button>
        <button aria-label="OneDrive"><svg class="i18" viewBox="0 0 24 24" v-html="icons.cloudOff" /></button>
        <button aria-label="Sync"><svg class="i18" viewBox="0 0 24 24" v-html="icons.sync" /></button>
        <button class="status" aria-label="Network, volume and battery">
          <svg class="i16" viewBox="0 0 24 24" v-html="icons.wifi" />
          <svg class="i16" viewBox="0 0 24 24" v-html="icons.volume" />
          <svg class="i18" viewBox="0 0 24 24" v-html="icons.battery" />
        </button>
        <div class="clock"><span>1:05 AM</span><span>12/17/2024</span></div>
        <button class="bell" aria-label="Notifications"><svg class="i16" viewBox="0 0 24 24" v-html="icons.bell" /></button>
      </div>
    </footer>
  </div>
</template>

<style>
html, body { margin: 0; overflow: hidden; }
</style>

<style scoped>
* { box-sizing: border-box; }
.screen {
  height: 100vh;
  display: flex;
  flex-direction: column;
  overflow: hidden;
  background: #fff;
  font-family: "Open Sans", "Noto Sans", sans-serif;
  font-size: 12px;
  color: #4a3539;
}
button { border: 0; padding: 0; background: none; color: inherit; font: inherit; display: flex; align-items: center; justify-content: center; cursor: pointer; }
input { border: 0; outline: 0; background: none; font: inherit; color: inherit; padding: 0; min-width: 0; }
a { color: inherit; text-decoration: none; }
svg { display: block; flex: none; }
.i10 { width: 10px; height: 10px; }
.i12 { width: 12px; height: 12px; }
.i14 { width: 14px; height: 14px; }
.i16 { width: 16px; height: 16px; }
.i18 { width: 18px; height: 18px; }
.i20 { width: 20px; height: 20px; }
.i23 { width: 23px; height: 23px; }
.i24 { width: 24px; height: 24px; }

.strip { height: 40px; flex: none; display: flex; align-items: center; background: #ffd9d9; padding-left: 6px; }
.tab-search { width: 28px; height: 28px; border-radius: 10px; background: #ffecea; color: #241517; margin-right: 5px; flex: none; }
.tabs { flex: 0 1 1108px; display: flex; height: 40px; min-width: 0; }
.tab { flex: 1 1 0; min-width: 0; display: flex; align-items: center; padding-left: 9px; position: relative; isolation: isolate; }
.tab::after { content: ""; position: absolute; right: 0; top: 12px; width: 2px; height: 16px; border-radius: 1px; background: #ffb3b5; }
.tab.active::after, .tab.plain::after { display: none; }
.tab.active::before {
  content: ""; position: absolute; z-index: -1; left: -8px; right: -6px; top: 6px; bottom: 0;
  background:
    radial-gradient(circle at 0 0, transparent 10px, #fff8f6 10px) left bottom / 10px 10px no-repeat,
    radial-gradient(circle at 100% 0, transparent 10px, #fff8f6 10px) right bottom / 10px 10px no-repeat,
    radial-gradient(circle at 10px 10px, #fff8f6 10px, transparent 10px) 10px 0 / 10px 10px no-repeat,
    radial-gradient(circle at 0 10px, #fff8f6 10px, transparent 10px) calc(100% - 10px) 0 / 10px 10px no-repeat,
    linear-gradient(#fff8f6, #fff8f6) center top / calc(100% - 40px) 100% no-repeat,
    linear-gradient(#fff8f6, #fff8f6) center bottom / calc(100% - 20px) calc(100% - 10px) no-repeat;
}
.tab-title { width: 24px; flex: none; margin-left: 8px; white-space: nowrap; color: #5a4245; mask-image: linear-gradient(90deg, #000 45%, transparent 100%); }
.active .tab-title { color: #2a1a1c; }
.tab-close { width: 16px; height: 16px; margin-left: 7px; color: #54393c; flex: none; }
.new-tab { width: 28px; height: 28px; color: #54393c; }
.win-controls { margin-left: auto; display: flex; color: #000; }
.win-controls button { width: 46px; height: 40px; }

.chrome-bars { flex: none; background: #ffd9d9; }
.toolbar { height: 46px; display: flex; align-items: center; background: #fff8f6; border-radius: 10px 10px 0 0; padding: 0 4px; }
.tool { width: 36px; height: 32px; color: #5c3b40; flex: none; }
.tool.off { color: #b3a3a4; }
.omnibox { flex: 1; height: 34px; border-radius: 17px; background: #f2e6ea; margin-left: 8px; padding: 0 8px 0 5px; display: flex; align-items: center; min-width: 0; }
.tune { width: 24px; height: 24px; border-radius: 12px; background: #fff8f6; color: #402c30; }
.url { flex: 1; margin-left: 8px; font-size: 13px; color: #221a1c; }
.omni-btn { width: 32px; height: 32px; color: #57444a; }
.tool-end { display: flex; align-items: center; margin-left: 8px; }
.rule { width: 2px; height: 16px; border-radius: 1px; background: #ffd3d4; margin: 0 8px; flex: none; }
.bookmarks { height: 35px; display: flex; align-items: center; background: #fff8f6; border-bottom: 1px solid #f3d8d8; padding: 0 14px 7px 17px; color: #4a3539; white-space: nowrap; font-size: 11px; }
.bm { display: flex; align-items: center; gap: 8px; }
.apps { width: 50px; gap: 7px; }
.blocks { display: flex; gap: 8px; margin-left: 10px; }
.more { width: 28px; height: 20px; margin-left: 8px; color: #57444a; }
.bookmarks .rule { margin: 0; margin-left: 8px; }
.site { margin-left: 16px; gap: 6px; }
.site.wide { margin-left: 26px; }
.bookmarks .rule + .site { margin-left: 14px; }
.bookmarks .rule.last { margin-left: auto; margin-right: 16px; }

.page { flex: 1; min-height: 0; display: flex; position: relative; overflow: hidden; font-family: Inter, "Open Sans", sans-serif; font-size: 16px; line-height: 24px; background: #fff; }
.sidebar { width: 289px; flex: none; border-right: 1px solid #e5e7eb; display: flex; flex-direction: column; color: #4b5563; }
.brand { display: flex; align-items: center; padding: 30px 16px 26px 30px; }
.logo { width: 100px; height: 96px; margin-top: 4px; fill: none; }
.brand-name { flex: 1; margin-left: 36px; color: #1f2428; }
.collapse { width: 28px; height: 28px; border-radius: 8px; background: #f9fafb; color: #000; }
.menu { flex: 1; padding: 0 12px; display: flex; flex-direction: column; gap: 4px; font-size: 17px; }
.menu-item { height: 40px; flex: none; display: flex; align-items: center; gap: 12px; padding: 0 12px; border-radius: 6px; }
.menu-item.on { background: linear-gradient(to top right, #c7d2fe, #e0e7ff); color: #3730a3; }
.menu hr { width: 100%; border: 0; border-top: 1px solid #e5e7eb; margin: 8px 0; }
.user { height: 65px; flex: none; border-top: 1px solid #e5e7eb; padding: 12px; display: flex; align-items: flex-start; }
.avatar { width: 40px; height: 40px; border-radius: 6px; background: #581c5c; color: #f6e9fa; font-size: 18px; font-weight: 600; display: flex; align-items: center; justify-content: center; }
.who { margin-left: 12px; flex: 1; min-width: 0; display: flex; flex-direction: column; line-height: 16px; padding-top: 3px; }
.who h4 { margin: 0; font-size: 17px; font-weight: 500; color: #000; }
.who span { font-size: 13px; color: #4b5563; padding-top: 2px; }
.user-menu { width: 28px; height: 40px; color: #111; }

.main { flex: 1; min-width: 0; padding: 24px 24px 0; display: flex; }
.card { flex: 1; min-width: 0; background: #f3f4f6; padding: 24px 24px 0; display: flex; flex-direction: column; }
.card h1 { margin: 0 0 24px; font-size: 30px; line-height: 36px; font-weight: 700; color: #374151; }
.search { width: 252px; height: 42px; border: 1px solid #d1d5db; border-radius: 6px; background: #fff; display: flex; align-items: center; padding: 0 10px; gap: 12px; color: #9ca3af; flex: none; }
.search input { flex: 1; color: #374151; }
input::placeholder { color: #9ca3af; opacity: 1; }
.list { list-style: none; margin: 24px 0 0; padding: 0; display: flex; flex-direction: column; gap: 16px; }
.task { height: 76px; border: 2px solid; border-radius: 6px; display: flex; align-items: center; padding: 0 24px; }
.blue { border-color: #3b82f6; color: #3b82f6; }
.pink { border-color: #ec4899; color: #ec4899; }
.green { border-color: #22c55e; color: #22c55e; }
.expand { color: #6b7280; }
.task-title { flex: 1; margin-left: 8px; font-size: 17px; }
.done .task-title, .done .edit { text-decoration: line-through #22c55e; }
.star { color: #6b7280; }
.star.lit { color: #eab308; }
.edit { color: #3b82f6; margin: 0 32px; }
.trash { color: #ef4444; }
.composer { margin-top: auto; background: #fff; padding: 12px; display: flex; align-items: center; gap: 16px; }
.composer input { flex: 1; height: 42px; border: 1px solid #d1d5db; border-radius: 6px; padding: 0 8px; color: #374151; background: #fff; }
.composer button { height: 40px; padding: 0 9px; border-radius: 6px; background: #22c55e; color: #fff; font-weight: 500; }

.scrollbar { width: 17px; flex: none; background: #f1f1f1; display: flex; flex-direction: column; align-items: center; padding: 6px 0; }
.thumb { width: 13px; flex: 1; margin: 6px 0 24px; background: #c1c1c1; }
.arrow { border: 4px solid transparent; }
.arrow.up { border-top: 0; border-bottom: 5px solid #a3a3a3; }
.arrow.down { border-bottom: 0; border-top: 5px solid #505050; }

.float-bar { position: absolute; left: 50%; bottom: 30px; margin-left: -48px; width: 80px; height: 32px; border-radius: 16px; background: #2e2e2e; border: 1px solid #575757; box-shadow: 0 4px 14px rgba(0, 0, 0, .25); color: #fff; display: flex; align-items: center; justify-content: space-between; padding: 0 3px; }
.float-bar button { width: 24px; height: 24px; }

.taskbar { height: 48px; flex: none; display: flex; align-items: center; border-top: 1px solid #c3b7bd; background: linear-gradient(90deg, #f9e5ea 0%, #fae5e8 18%, #f9e5d8 25%, #f9e5da 32%, #fae4df 35%, #f9e7d3 42%, #f9e3db 49%, #f7eccb 54%, #f3eed0 57%, #e4eef4 62%, #e2e8f2 67%, #dfecf8 78%, #e0eaf8 85%, #ebe3f6 92%, #f1e4f5 100%); color: #222; }
.weather { width: 24px; height: 24px; margin-left: 20px; position: relative; }
.weather span { position: absolute; left: 11px; top: -9px; width: 16px; height: 16px; border-radius: 8px; background: #c42b1c; color: #fff; font-size: 11px; line-height: 16px; text-align: center; }
.dock { margin-left: 133px; display: flex; align-items: center; }
.dock-btn { width: 44px; height: 40px; position: relative; }
.win-search { width: 218px; height: 32px; border: 1px solid #e5cfd1; border-radius: 16px; background: #fdf7f6; display: flex; align-items: center; padding: 0 2px 0 9px; margin: 0 3px 0 4px; }
.win-search input { flex: 1; margin-left: 10px; font-size: 13px; }
.win-search input::placeholder { color: #5f5758; }
.bust { width: 36px; height: 26px; }
.lead { margin-right: -4px; }
.raised { align-self: flex-start; margin-top: 3px; margin-left: -6px; }
.raised + svg { align-self: flex-end; margin: 0 1px 7px -6px; }
.badge { position: absolute; right: 2px; top: 2px; width: 16px; height: 16px; border-radius: 8px; }
.badge.dark { width: 12px; height: 12px; right: 10px; top: 8px; background: radial-gradient(circle at 50% 60%, #b39560 0 2px, #2b2613 3px); }
.current::before { content: ""; position: absolute; z-index: 0; left: 3px; right: 3px; top: 1px; bottom: 1px; border: 1px solid #e2e0ea; border-radius: 5px; background: #f5f5fa; }
.current svg { position: relative; }
.current svg.badge { position: absolute; }
.current::after, .open::after { content: ""; position: absolute; left: 19px; bottom: 0; width: 6px; height: 3px; border-radius: 2px; background: #83868c; }
.current::after { left: 14px; width: 16px; background: #744ca8; }
.tray { margin-left: auto; display: flex; align-items: center; padding-right: 19px; }
.tray > button { width: 32px; height: 40px; }
.tray > .status { width: 80px; gap: 7px; }
.clock { display: flex; flex-direction: column; align-items: flex-end; line-height: 16px; width: 71px; }
.tray > .bell { width: 18px; margin-left: 6px; }
</style>
